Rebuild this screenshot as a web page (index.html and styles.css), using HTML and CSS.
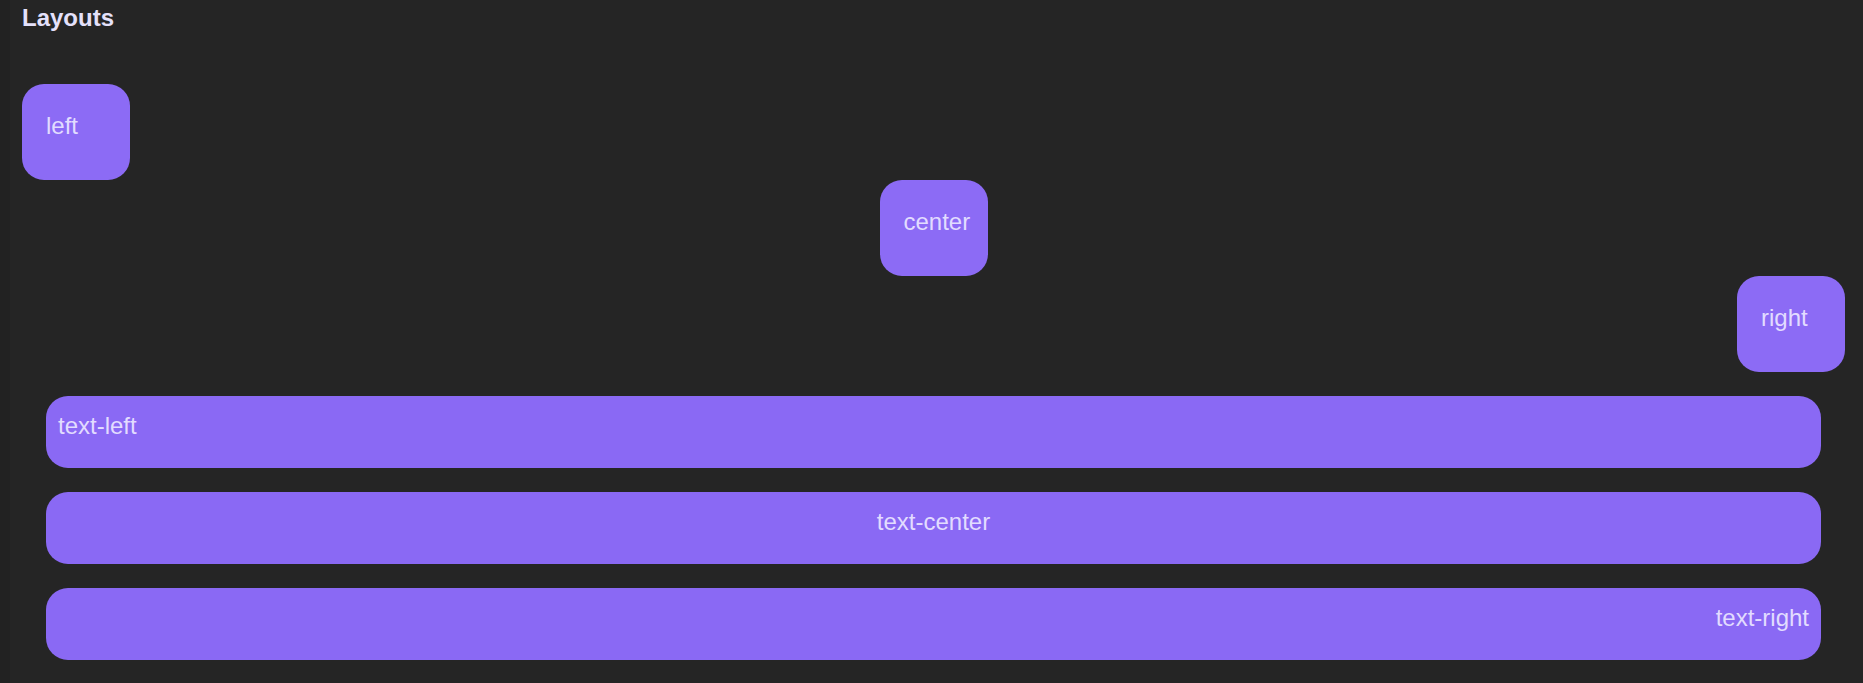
FILE: index.html
```html
<!DOCTYPE html>
<html>
<head>
<meta charset="utf-8">
<link rel="stylesheet" href="styles.css">
</head>
<body>
<div class="page">
  <div class="edge"></div>
  <main class="main">
    <h1 class="title">Layouts</h1>
    <div class="boxes">
      <div class="box box-left">left</div>
      <div class="box box-center">center</div>
      <div class="box box-right">right</div>
    </div>
    <div class="bars">
      <div class="bar bar-left">text-left</div>
      <div class="bar bar-center">text-center</div>
      <div class="bar bar-right">text-right</div>
    </div>
  </main>
</div>
</body>
</html>
```
FILE: styles.css
```css
html, body {
  margin: 0;
  padding: 0;
  background: #252525;
  font-family: "Liberation Sans", Arial, sans-serif;
}
.page {
  display: flex;
  min-height: 683px;
}
.edge {
  width: 10px;
  flex: none;
  background: #222222;
}
.main {
  flex: 1;
  padding: 4px 18px 0 12px;
  background: #252525;
}
.title {
  margin: 0;
  font-size: 24px;
  font-weight: bold;
  line-height: 28px;
  color: #e4e1fb;
}
.boxes {
  display: flex;
  flex-direction: column;
  margin-top: 52px;
}
.box {
  box-sizing: border-box;
  width: 108px;
  height: 96px;
  padding: 24px;
  border-radius: 22px;
  background: #8c6bf5;
  color: #e2dcff;
  font-size: 24px;
  line-height: 36px;
}
.box-center { align-self: center; }
.box-right { align-self: flex-end; }
.bars {
  display: flex;
  flex-direction: column;
  gap: 24px;
  margin: 24px 24px 0;
}
.bar {
  box-sizing: border-box;
  height: 72px;
  padding: 12px;
  border-radius: 22px;
  background: #8a69f4;
  color: #e2dcff;
  font-size: 24px;
  line-height: 36px;
}
.bar-center { text-align: center; }
.bar-right { text-align: right; }
```
